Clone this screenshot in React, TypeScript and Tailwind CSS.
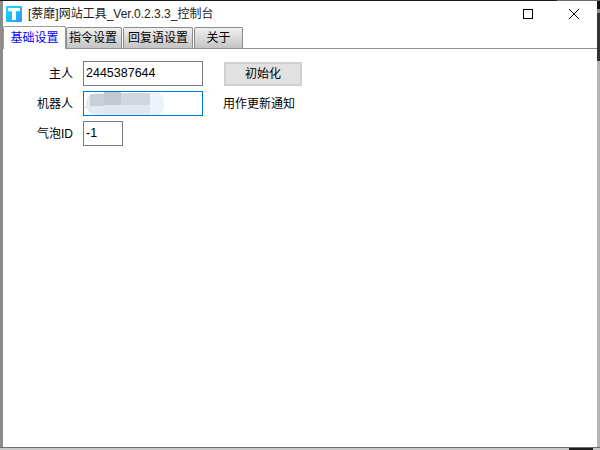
import React from 'react';

const cjk = '"Liberation Sans","Noto Sans CJK SC",sans-serif';

function Tab({ label, active, width }: { label: string; active?: boolean; width: string }) {
  if (active) {
    return (
      <div className={`${width} h-[23px] -mb-px z-10 flex items-center justify-center bg-white border border-b-0 border-[#9a9a9a] rounded-t-[2px] text-[12px] text-[#0000ff]`}>
        {label}
      </div>
    );
  }
  return (
    <div className={`${width} h-[21px] flex items-center justify-center bg-gradient-to-b from-[#f0f0f0] to-[#c4c4c4] border border-[#8a8a8a] border-b-0 rounded-t-[2px] text-[12px] text-black`}>
      {label}
    </div>
  );
}

export default function App() {
  return (
    <div className="w-[600px] h-[450px] overflow-hidden flex flex-col bg-[#c8c8c8] text-[12px] text-black" style={{ fontFamily: cjk }}>
      <div className="h-px flex">
        <div className="w-[557px] bg-[#1c1c1c]" />
        <div className="flex-1 bg-[#6a6a6a]" />
      </div>
      <div className="flex flex-1 min-h-0">
        <div className="w-[3px] bg-[#8c8c8c]" />
        <div className="flex-1 min-w-0 flex flex-col bg-white">
          {/* title bar */}
          <div className="h-[26px] flex items-center">
            <svg className="ml-[3px] -mt-[1px]" width="16" height="16" viewBox="0 0 16 16">
              <defs>
                <linearGradient id="tlogo" x1="0" y1="0" x2="1" y2="1">
                  <stop offset="0" stopColor="#12e4f2" />
                  <stop offset="1" stopColor="#2a96f5" />
                </linearGradient>
              </defs>
              <rect width="16" height="16" rx="1" fill="url(#tlogo)" />
              <path d="M2 2h12v3.2h-4v8.8h-4v-8.8h-4z" fill="#ffffff" />
            </svg>
            <span className="ml-[6px] -mt-[1px] text-[12px] text-[#222]">[萘靡]网站工具_Ver.0.2.3.3_控制台</span>
            <div className="ml-auto flex items-center mr-[18px] -mt-[1px]">
              <div className="w-[10px] h-[10px] border border-black mr-[36px]" />
              <svg width="10" height="10" viewBox="0 0 10 10">
                <path d="M0 0l10 10M10 0l-10 10" stroke="#000" strokeWidth="1" />
              </svg>
            </div>
          </div>
          {/* tabs */}
          <div className="h-[22px] flex items-end border-b border-[#8f8f8f]">
            <Tab label="基础设置" active width="w-[63px]" />
            <Tab label="指令设置" width="w-[56px] mr-px pr-[2px]" />
            <Tab label="回复语设置" width="w-[70px] mr-px" />
            <Tab label="关于" width="w-[49px]" />
          </div>
          {/* form */}
          <div className="flex-1 flex flex-col gap-[5px] pt-[12px]">
            <div className="flex items-center">
              <span className="w-[70px] text-right">主人</span>
              <div className="ml-[10px] w-[120px] h-[25px] border border-[#7a7a7a] flex items-center pl-[2px] text-[12.5px]">2445387644</div>
              <div className="ml-[21px] w-[78px] h-[24px] border-2 border-[#d0d0d0] bg-[#e1e1e1] flex items-center justify-center">初始化</div>
            </div>
            <div className="flex items-center">
              <span className="w-[70px] text-right">机器人</span>
              <div className="ml-[10px] relative w-[120px] h-[25px] border border-[#0078d7] overflow-hidden">
                <svg className="absolute left-0 top-0" width="118" height="23" viewBox="0 0 118 23">
                  <rect x="2" y="1" width="76" height="22" rx="10" fill="#e4eaf1" />
                  <rect x="64" y="1" width="16" height="22" rx="8" fill="#edf3fb" />
                  <rect x="66" y="1" width="10" height="22" fill="#edf3fb" />
                  <rect x="6" y="2" width="14" height="12" fill="#c8d0d8" />
                  <rect x="20" y="0" width="17" height="13" fill="#c2c9d0" />
                  <rect x="37" y="1" width="29" height="12" fill="#d0d7df" />
                  <rect x="20" y="13" width="46" height="8" fill="#dfe6ed" />
                  <rect x="1" y="15" width="1" height="1" fill="#f0a040" />
                </svg>
              </div>
              <span className="ml-[20px]">用作更新通知</span>
            </div>
            <div className="flex items-center">
              <span className="w-[70px] text-right">气泡ID</span>
              <div className="ml-[10px] w-[40px] h-[25px] border border-[#7a7a7a] flex items-center pl-[2px] text-[12.5px]">-1</div>
            </div>
          </div>
        </div>
        <div className="w-[3px] flex flex-col">
          <div className="h-[8px] bg-[#111]" />
          <div className="h-[4px] bg-[#8a8a8a]" />
          <div className="h-[48px] bg-[#333]" />
          <div className="flex-1 bg-[#b4b4b4]" />
        </div>
      </div>
      <div className="h-[1px] bg-[#6e6e6e]" />
      <div className="h-[2px] flex">
        <div className="w-[569px] bg-[#c8c8c8]" />
        <div className="w-[24px] bg-[#1c1c1c]" />
        <div className="flex-1 bg-[#c8c8c8]" />
      </div>
    </div>
  );
}
